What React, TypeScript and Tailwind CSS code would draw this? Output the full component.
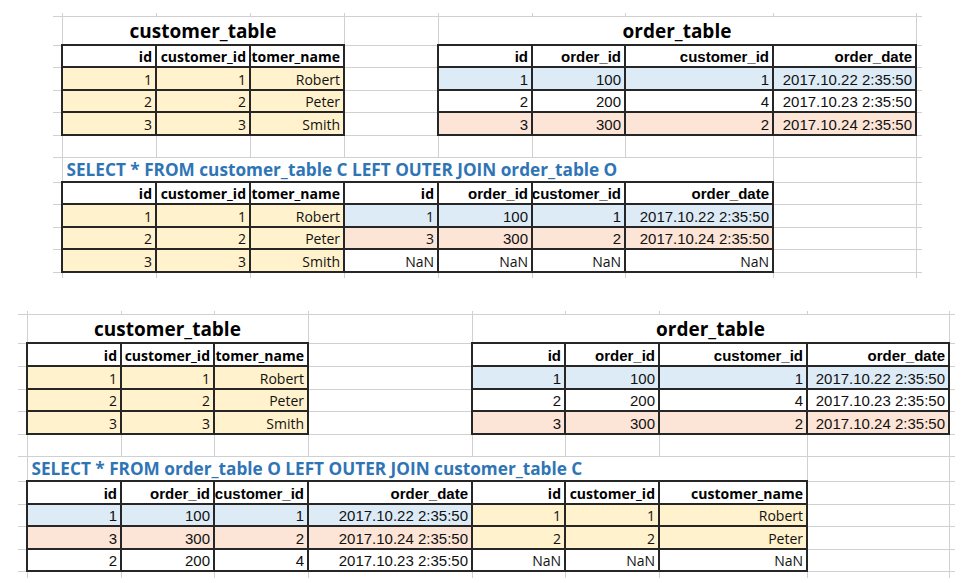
import React from "react";

const K = "font-['Open_Sans',sans-serif] text-[14px] text-[#111]";
const KB = "font-['Open_Sans',sans-serif] text-[14px] font-bold text-black";
const A = "font-['Liberation_Sans',Arial,sans-serif] text-[15px] text-[#111]";
const AB = "font-['Liberation_Sans',Arial,sans-serif] text-[15px] font-bold text-black";

const Y = "bg-[#fff2cc]";
const B = "bg-[#ddebf7]";
const P = "bg-[#fce4d6]";
const W = "bg-white";

type Cell = {
  t?: string;
  f?: string;
  bg?: string;
  box?: boolean;
  span?: number;
  kind?: "title" | "sql";
};
type Row = { h: string; cells: Cell[] };

const c = (t: string, f: string, bg: string): Cell => ({ t, f, bg, box: true });
const e: Cell = {};
const title = (t: string, span: number): Cell => ({ t, span, kind: "title" });
const sql = (t: string, span: number): Cell => ({ t, span, kind: "sql" });

function Td({ cell }: { cell: Cell }) {
  if (cell.kind === "title") {
    return (
      <td colSpan={cell.span} className="p-0 align-bottom text-center border border-[#d0d0d0]">
        <div className="font-['Open_Sans',sans-serif] text-[19px] font-bold leading-[26px] text-black whitespace-nowrap">
          {cell.t}
        </div>
      </td>
    );
  }
  if (cell.kind === "sql") {
    return (
      <td colSpan={cell.span} className="p-0 align-bottom border border-[#d0d0d0]">
        <div className="pl-[4px] font-['Open_Sans',sans-serif] text-[17.2px] font-bold leading-[23px] text-[#2f75b5] whitespace-nowrap">
          {cell.t}
        </div>
      </td>
    );
  }
  if (!cell.box) {
    return <td className="p-0 border border-[#d0d0d0]" />;
  }
  return (
    <td className={`p-0 align-bottom border-2 border-[#262626] ${cell.bg ?? ""}`}>
      <div className={`flex justify-end overflow-hidden whitespace-nowrap pr-[3px] leading-[19px] ${cell.f ?? ""}`}>
        {cell.t}
      </div>
    </td>
  );
}

function Sheet({
  cols,
  rows,
  width,
  topH,
  botH,
}: {
  cols: string[];
  rows: Row[];
  width: string;
  topH: string;
  botH: string;
}) {
  return (
    <table className={`table-fixed border-collapse ${width}`}>
      <colgroup>
        <col className="w-[9px]" />
        {cols.map((w, i) => (
          <col key={i} className={w} />
        ))}
        <col className="w-[6px]" />
      </colgroup>
      <tbody>
        <tr className={topH}>
          <td className="p-0 border-r border-b border-[#d0d0d0]" />
          {cols.map((_, i) => (
            <td key={i} className="p-0 border-r border-b border-[#d0d0d0]" />
          ))}
          <td className="p-0 border-b border-[#d0d0d0]" />
        </tr>
        {rows.map((r, ri) => (
          <tr key={ri} className={r.h}>
            <td className="p-0 border-b border-r border-[#d0d0d0]" />
            {r.cells.map((cell, ci) => (
              <Td key={ci} cell={cell} />
            ))}
            <td className="p-0 border-b border-l border-[#d0d0d0]" />
          </tr>
        ))}
        <tr className={botH}>
          <td className="p-0 border-r border-[#d0d0d0]" />
          {cols.map((_, i) => (
            <td key={i} className="p-0 border-r border-[#d0d0d0]" />
          ))}
          <td className="p-0" />
        </tr>
      </tbody>
    </table>
  );
}

const D22 = "2017.10.22 2:35:50";
const D23 = "2017.10.23 2:35:50";
const D24 = "2017.10.24 2:35:50";

const topRows: Row[] = [
  { h: "h-[29px]", cells: [title("customer_table", 3), e, title("order_table", 4)] },
  {
    h: "h-[22px]",
    cells: [
      c("id", KB, W), c("customer_id", KB, W), c("customer_name", KB, W), e,
      c("id", AB, W), c("order_id", AB, W), c("customer_id", AB, W), c("order_date", AB, W),
    ],
  },
  {
    h: "h-[23px]",
    cells: [c("1", K, Y), c("1", K, Y), c("Robert", K, Y), e, c("1", A, B), c("100", A, B), c("1", A, B), c(D22, A, B)],
  },
  {
    h: "h-[22px]",
    cells: [c("2", K, Y), c("2", K, Y), c("Peter", K, Y), e, c("2", A, W), c("200", A, W), c("4", A, W), c(D23, A, W)],
  },
  {
    h: "h-[23px]",
    cells: [c("3", K, Y), c("3", K, Y), c("Smith", K, Y), e, c("3", A, P), c("300", A, P), c("2", A, P), c(D24, A, P)],
  },
  { h: "h-[22px]", cells: [e, e, e, e, e, e, e, e] },
  { h: "h-[25px]", cells: [sql("SELECT * FROM customer_table C LEFT OUTER JOIN order_table O", 7), e] },
  {
    h: "h-[22px]",
    cells: [
      c("id", KB, W), c("customer_id", KB, W), c("customer_name", KB, W), c("id", KB, W),
      c("order_id", AB, W), c("customer_id", AB, W), c("order_date", AB, W), e,
    ],
  },
  {
    h: "h-[23px]",
    cells: [c("1", K, Y), c("1", K, Y), c("Robert", K, Y), c("1", K, B), c("100", A, B), c("1", A, B), c(D22, A, B), e],
  },
  {
    h: "h-[22px]",
    cells: [c("2", K, Y), c("2", K, Y), c("Peter", K, Y), c("3", K, P), c("300", A, P), c("2", A, P), c(D24, A, P), e],
  },
  {
    h: "h-[23px]",
    cells: [c("3", K, Y), c("3", K, Y), c("Smith", K, Y), c("NaN", K, W), c("NaN", K, W), c("NaN", K, W), c("NaN", K, W), e],
  },
];

const botRows: Row[] = [
  { h: "h-[29px]", cells: [title("customer_table", 3), e, title("order_table", 4)] },
  {
    h: "h-[23px]",
    cells: [
      c("id", KB, W), c("customer_id", KB, W), c("customer_name", KB, W), e,
      c("id", AB, W), c("order_id", AB, W), c("customer_id", AB, W), c("order_date", AB, W),
    ],
  },
  {
    h: "h-[23px]",
    cells: [c("1", K, Y), c("1", K, Y), c("Robert", K, Y), e, c("1", A, B), c("100", A, B), c("1", A, B), c(D22, A, B)],
  },
  {
    h: "h-[22px]",
    cells: [c("2", K, Y), c("2", K, Y), c("Peter", K, Y), e, c("2", A, W), c("200", A, W), c("4", A, W), c(D23, A, W)],
  },
  {
    h: "h-[23px]",
    cells: [c("3", K, Y), c("3", K, Y), c("Smith", K, Y), e, c("3", A, P), c("300", A, P), c("2", A, P), c(D24, A, P)],
  },
  { h: "h-[22px]", cells: [e, e, e, e, e, e, e, e] },
  { h: "h-[25px]", cells: [sql("SELECT * FROM order_table O LEFT OUTER JOIN customer_table C", 7), e] },
  {
    h: "h-[23px]",
    cells: [
      c("id", AB, W), c("order_id", AB, W), c("customer_id", AB, W), c("order_date", AB, W),
      c("id", KB, W), c("customer_id", KB, W), c("customer_name", KB, W), e,
    ],
  },
  {
    h: "h-[22px]",
    cells: [c("1", A, B), c("100", A, B), c("1", A, B), c(D22, A, B), c("1", K, Y), c("1", K, Y), c("Robert", K, Y), e],
  },
  {
    h: "h-[23px]",
    cells: [c("3", A, P), c("300", A, P), c("2", A, P), c(D24, A, P), c("2", K, Y), c("2", K, Y), c("Peter", K, Y), e],
  },
  {
    h: "h-[22px]",
    cells: [c("2", A, W), c("200", A, W), c("4", A, W), c(D23, A, W), c("NaN", K, W), c("NaN", K, W), c("NaN", K, W), e],
  },
];

export default function App() {
  return (
    <div className="w-[969px] h-[583px] bg-white overflow-hidden">
      <div className="pt-[13px] pl-[53px]">
        <Sheet
          cols={["w-[94px]", "w-[94px]", "w-[94px]", "w-[94px]", "w-[94px]", "w-[93px]", "w-[148px]", "w-[143px]"]}
          rows={topRows}
          width="w-[869px]"
          topH="h-[3px]"
          botH="h-[6px]"
        />
      </div>
      <div className="pt-[33px] pl-[18px]">
        <Sheet
          cols={["w-[94px]", "w-[93px]", "w-[94px]", "w-[164px]", "w-[93px]", "w-[94px]", "w-[148px]", "w-[142px]"]}
          rows={botRows}
          width="w-[937px]"
          topH="h-[3px]"
          botH="h-[7px]"
        />
      </div>
    </div>
  );
}
